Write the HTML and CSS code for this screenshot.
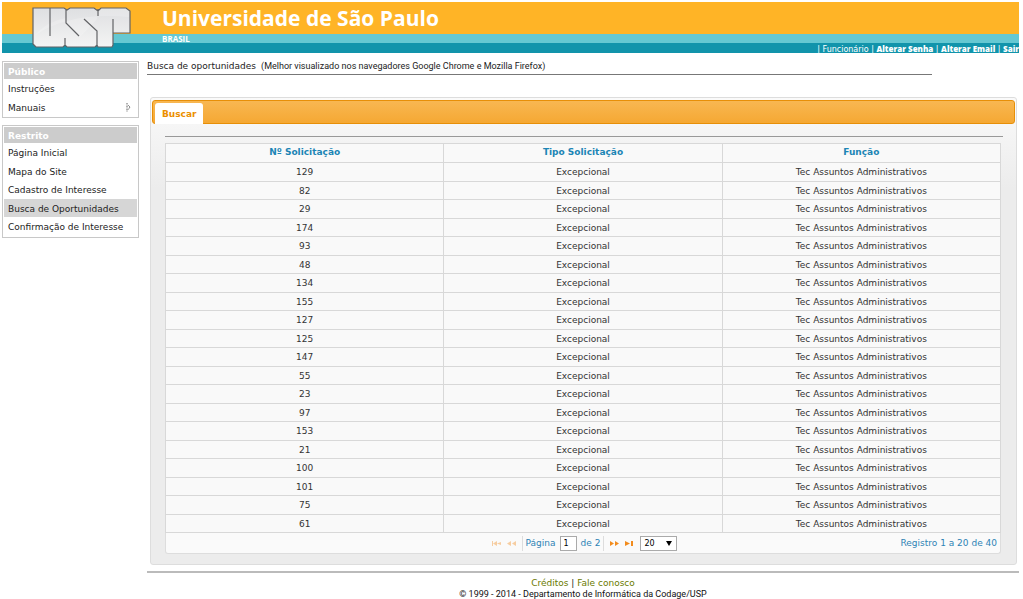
FILE: index.html
```html
<!DOCTYPE html>
<html lang="pt-BR">
<head>
<meta charset="utf-8">
<title>Universidade de São Paulo</title>
<link rel="stylesheet" href="styles.css">
</head>
<body>
<header class="banner">
  <svg class="logo" viewBox="0 0 100 41" role="img" aria-label="USP">
    <defs><linearGradient id="silver" x1="0" y1="0" x2="0" y2="1"><stop offset="0" stop-color="#dedfe1"/><stop offset="1" stop-color="#f4f4f4"/></linearGradient></defs>
    <path d="M1 1H32L35 3L38 1H62L66 4L69 1H94L98 4V26H81V38L80 40H66L65 38L63 40H35L33 38L31 40H4L1 37Z" fill="url(#silver)"/>
    <path d="M2 29Q15 14 34 11V18L48 30L65 12V2L69 1H94L97 4V10Q60 7 35 14Q18 18 2 29Z" fill="#fff" opacity=".2"/>
    <path d="M1 1H32L35 3L38 1H62L66 4L69 1H94L98 4V26H81V38L80 40H66L65 38L63 40H35L33 38L31 40H4L1 37ZM18 1V29M34 2V16L47 29M52 12L65 24V38M33 31V38M66 2V9M81 12V26" fill="none" stroke="#626366" stroke-width="1.2"/>
  </svg>
  <div class="banner-text">
    <h1 class="university">Universidade de São Paulo</h1>
    <div class="country">BRASIL</div>
    <nav class="account">| Funcionário | <a href="#">Alterar Senha</a> | <a href="#">Alterar Email</a> | <a href="#">Sair</a></nav>
  </div>
</header>
<div class="page">
  <aside class="sidebar">
    <nav class="menu">
      <h2 class="menu-title">Público</h2>
      <a class="menu-item" href="#">Instruções</a>
      <a class="menu-item" href="#">Manuais <svg class="submenu" viewBox="0 0 5 9" aria-hidden="true"><path d="M1 0V9M2 2L4 4L2 7" fill="none" stroke="#666" stroke-dasharray="1 .5"/></svg></a>
    </nav>
    <nav class="menu">
      <h2 class="menu-title">Restrito</h2>
      <a class="menu-item" href="#">Página Inicial</a>
      <a class="menu-item" href="#">Mapa do Site</a>
      <a class="menu-item" href="#">Cadastro de Interesse</a>
      <a class="menu-item current" href="#">Busca de Oportunidades</a>
      <a class="menu-item" href="#">Confirmação de Interesse</a>
    </nav>
  </aside>
  <main class="content">
    <div class="heading"><h2 class="heading-title">Busca de oportunidades</h2><span class="hint">(Melhor visualizado nos navegadores Google Chrome e Mozilla Firefox)</span></div>
    <section class="panel">
      <div class="tabs"><button class="tab" type="button">Buscar</button></div>
      <div class="results">
        <table class="grid">
          <thead><tr><th>Nº Solicitação</th><th>Tipo Solicitação</th><th>Função</th></tr></thead>
          <tbody id="rows"></tbody>
        </table>
        <div class="pager">
          <div class="pager-controls">
            <button class="nav-button off" type="button" aria-label="Primeira"><svg viewBox="0 0 9 7"><path d="M0 1H1V6H0ZM5 1V6L1 3.5ZM9 2V5L5 3.5Z"/></svg></button>
            <button class="nav-button off" type="button" aria-label="Anterior"><svg viewBox="0 0 9 7"><path d="M4 1V6L0 3.5ZM9 1V6L5 3.5Z"/></svg></button>
            <span class="page-field"><label for="page">Página</label><input id="page" class="page-input" value="1"><span>de 2</span></span>
            <button class="nav-button" type="button" aria-label="Próxima"><svg viewBox="0 0 9 7"><path d="M0 1V6L4 3.5ZM5 1V6L9 3.5Z"/></svg></button>
            <button class="nav-button" type="button" aria-label="Última"><svg viewBox="0 0 9 7"><path d="M0 1V6L5 3.5ZM6 1H8V6H6Z"/></svg></button>
            <span class="size-box"><select class="size-select" aria-label="Registros por página"><option>20</option></select><svg class="arrow" viewBox="0 0 6 5" aria-hidden="true"><path d="M0 0H6L3 5Z"/></svg></span>
          </div>
          <span class="records">Registro 1 a 20 de 40</span>
        </div>
      </div>
    </section>
    <footer class="footer">
      <div class="footer-links"><a href="#">Créditos</a> | <a href="#">Fale conosco</a></div>
      <div class="copyright">© 1999 - 2014 - Departamento de Informática da Codage/USP</div>
    </footer>
  </main>
</div>
<script src="rows.js"></script>
</body>
</html>
```
FILE: styles.css
```css
* { box-sizing: border-box; }
body { margin: 0; padding: 2px 4px 0 2px; background: #fff; color: #333; font-family: "DejaVu Sans", Verdana, sans-serif; font-size: 9px; overflow: hidden; }
h1, h2 { margin: 0; }
a { color: inherit; text-decoration: none; }
button { padding: 0; border: 0; background: none; font-family: inherit; }

.banner { display: flex; overflow: hidden; color: #fff; background: linear-gradient(#ffb426 32px, #65c8d2 32px, #65c8d2 41px, #1194ab 41px); }
.logo { flex: none; width: 100px; height: 41px; margin: 5px 30px 0 30px; }
.banner-text { flex: 1; min-width: 0; }
.university { height: 32px; font-family: "Open Sans", sans-serif; font-size: 21px; font-weight: 700; line-height: 32px; }
.country { height: 10px; font-family: "Open Sans", sans-serif; font-size: 8px; line-height: 10px; font-weight: 700; }
.account { height: 9px; font-size: 8px; line-height: 9px; text-align: right; white-space: pre; }
.account a { font-family: "Open Sans", sans-serif; font-weight: 800; }

.page { display: flex; gap: 8px; padding-top: 8px; }
.sidebar { flex: none; width: 137px; }
.menu { margin-bottom: 7px; padding: 1px; border: 1px solid #c8c8c8; }
.menu-title { height: 16px; padding-left: 4px; background: #ccc; color: #fff; font-size: 9px; line-height: 18px; }
.menu-item { display: flex; align-items: center; justify-content: space-between; height: 18px; padding: 1px 6px 0 4px; color: #222; }
.menu-item:nth-child(even) { height: 19px; }
.current { background: #d6d6d6; }
.submenu { width: 5px; height: 9px; }

.content { flex: 1; min-width: 0; }
.heading { display: flex; gap: 5px; width: 90%; height: 14px; border-bottom: 1px solid #777; color: #222; }
.heading-title { font-size: 9px; font-weight: 400; line-height: 11px; }
.hint { font: 9px/11px Roboto, Arial, sans-serif; }
.panel { margin: 22px 2px 6px 3px; padding: 2px 1px 10px; border: 1px solid #ddd; border-radius: 3px; background: linear-gradient(#fafafa, #ececec 90px); }
.tabs { display: flex; padding: 2px; height: 24px; border: 1px solid #e78f08; border-radius: 3px; background: linear-gradient(#f8b752, #f5a833); }
.tab { height: 21px; padding: 0 7px; border-radius: 3px 3px 0 0; background: #fff; color: #eb8f00; font-size: 9px; font-weight: 700; }
.results { margin: 12px 12px 0 13px; padding: 6px 2px 0 0; border-top: 1px solid #999; }
.grid { width: 100%; table-layout: fixed; border-collapse: collapse; background: #f9f9f9; }
.grid th, .grid td { padding: 0; border: 1px solid #d8d8d8; text-align: center; line-height: 12px; }
.grid th { padding-bottom: 2px; color: #1c85b5; }
.grid tr { height: 19px; }
.grid tbody tr:nth-child(even) { height: 18px; }
.pager { display: grid; grid-template-columns: 1fr auto 1fr; align-items: center; height: 21px; padding-right: 3px; border: 1px solid #ddd; border-top: 0; border-radius: 0 0 3px 3px; background: #fafafa; color: #2e83b5; }
.pager-controls { grid-column: 2; display: flex; align-items: center; gap: 6px; padding-left: 6px; }
.records { text-align: right; }
.nav-button { display: flex; fill: #f28c1e; }
.nav-button svg { width: 9px; height: 7px; }
.off { opacity: .4; }
.page-field { display: flex; align-items: center; gap: 4px; padding: 0 3px; border: solid #ddd; border-width: 0 1px; }
.page-input { width: 17px; height: 15px; padding: 0 3px; border: 1px solid #aaa; font: 8px "DejaVu Sans", sans-serif; }
.size-box { display: grid; align-items: center; }
.size-select { grid-area: 1 / 1; width: 37px; height: 15px; padding: 0 3px; border: 1px solid #aaa; background: #fff; appearance: none; font: 8px "DejaVu Sans", sans-serif; }
.arrow { grid-area: 1 / 1; justify-self: end; width: 6px; height: 5px; margin-right: 5px; pointer-events: none; }

.footer { padding-top: 4px; border-top: 2px solid #bbb; text-align: center; color: #222; }
.footer-links { line-height: 12px; }
.footer-links a { color: #6b7a00; }
.copyright { color: #111; font: 9px/11px Roboto, Arial, sans-serif; }
```
FILE: rows.js
```js
const requests = [129, 82, 29, 174, 93, 48, 134, 155, 127, 125, 147, 55, 23, 97, 153, 21, 100, 101, 75, 61];
document.getElementById("rows").innerHTML = requests
  .map((number) => `<tr><td>${number}</td><td>Excepcional</td><td>Tec Assuntos Administrativos</td></tr>`)
  .join("");
```
